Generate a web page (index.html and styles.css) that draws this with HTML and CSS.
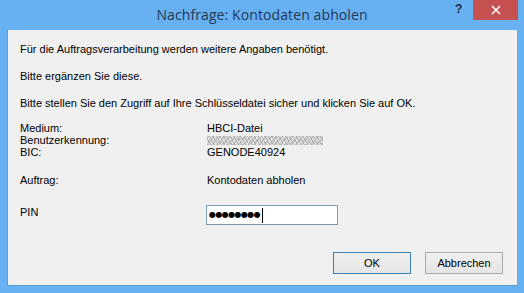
FILE: index.html
```html
<!DOCTYPE html>
<html lang="de">
<head>
<meta charset="utf-8">
<title>Nachfrage: Kontodaten abholen</title>
<link rel="stylesheet" href="styles.css">
</head>
<body>
<div class="window">
  <div class="titlebar">
    <div class="title">Nachfrage: Kontodaten abholen</div>
    <div class="help">?</div>
    <div class="close">
      <svg width="10" height="10" viewBox="0 0 10 10"><path d="M1 1 L9 9 M9 1 L1 9" stroke="#fff" stroke-width="1.6" fill="none"/></svg>
    </div>
  </div>
  <div class="client">
    <p class="line l1">Für die Auftragsverarbeitung werden weitere Angaben benötigt.</p>
    <p class="line l2">Bitte ergänzen Sie diese.</p>
    <p class="line l3">Bitte stellen Sie den Zugriff auf Ihre Schlüsseldatei sicher und klicken Sie auf OK.</p>
    <div class="info">
      <span>Medium:</span><span>HBCI-Datei</span>
      <span>Benutzerkennung:</span><span><span class="blur"></span></span>
      <span>BIC:</span><span>GENODE40924</span>
    </div>
    <div class="row auftrag"><span class="lbl">Auftrag:</span><span>Kontodaten abholen</span></div>
    <div class="row pin"><span class="lbl">PIN</span>
      <div class="input"><span class="dots">●●●●●●●●</span><span class="caret"></span></div>
    </div>
    <div class="buttons">
      <div class="btn default">OK</div>
      <div class="btn">Abbrechen</div>
    </div>
  </div>
</div>
</body>
</html>
```
FILE: styles.css
```css
html, body { margin: 0; padding: 0; }
body { width: 524px; height: 293px; overflow: hidden; }
.window {
  width: 524px; height: 293px; background: #67b0f2;
  display: flex; flex-direction: column; box-sizing: border-box;
}
.titlebar {
  height: 30px; position: relative; flex: none;
}
.title {
  text-align: center; font-family: "Open Sans", "Noto Sans", sans-serif;
  font-size: 14px; color: #233a52; line-height: 30px; letter-spacing: 0.1px;
}
.help {
  position: absolute; left: 455px; top: 2px; font-family: "Liberation Sans", sans-serif;
  font-weight: bold; font-size: 12px; color: #1c2b3a;
}
.close {
  position: absolute; left: 473px; top: 0; width: 45px; height: 20px; background: #c75050;
  display: flex; align-items: center; justify-content: center;
}
.client {
  margin: 0 7px 7px 7px; height: 256px; background: #f0f0f0; box-sizing: border-box;
  border-left: 1px solid #5c9fd9; border-bottom: 1px solid #5c9fd9;
  font-family: "Liberation Sans", Arial, sans-serif; font-size: 11px; color: #000;
  line-height: 12px; padding: 13px 0 0 12px; display: flex; flex-direction: column;
}
.line { margin: 0; height: 12px; white-space: nowrap; }
.l2, .l3 { margin-top: 15px; }
.info {
  margin-top: 13px; display: grid; grid-template-columns: 187px auto; grid-auto-rows: 12px;
}
.blur {
  display: inline-block; width: 116px; height: 9px; margin-top: 2px;
  background:
    repeating-linear-gradient(60deg, rgba(150,150,150,0.6) 0 1px, transparent 1px 3px),
    repeating-linear-gradient(-50deg, rgba(190,190,190,0.7) 0 2px, transparent 2px 4px),
    #e2e2e2;
}
.row { display: flex; align-items: center; }
.lbl { width: 187px; flex: none; }
.auftrag { margin-top: 16px; height: 12px; }
.pin { margin-top: 19px; height: 20px; }
.pin .lbl { margin-top: -6px; }
.input {
  width: 132px; height: 20px; box-sizing: border-box; margin-left: -1px;
  border: 1px solid #7a9cb6; background: #fff; display: flex; align-items: center;
  padding-left: 2px;
}
.dots { font-size: 8px; letter-spacing: -0.6px; font-family: "DejaVu Sans", sans-serif; }
.caret { width: 1px; height: 15px; background: #000; margin-left: 2px; }
.buttons {
  margin-top: 27px; display: flex; justify-content: flex-end; gap: 14px; padding-right: 14px;
}
.btn {
  width: 78px; height: 22px; box-sizing: border-box; border: 1px solid #acacac;
  background: linear-gradient(#f0f0f0, #e5e5e5); display: flex; align-items: center;
  justify-content: center;
}
.btn.default { border-color: #3c7fb1; }
```
